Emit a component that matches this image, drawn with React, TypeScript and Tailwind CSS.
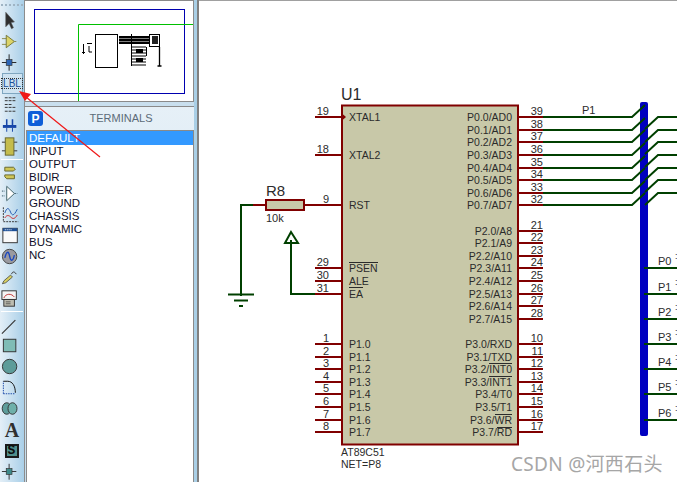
import React from 'react';

const MAROON = '#800000';
const GREEN = '#004000';
const INK = '#2b2b2b';

const Ic: React.FC<{ children: React.ReactNode }> = ({ children }) => (
  <svg width="25" height="21" viewBox="0 0 25 21" className="block">
    {children}
  </svg>
);

const TopTools = [
  // selection arrow
  <Ic key="a"><path d="M6 2 L6 17 L9.5 13.5 L12 19 L14 18 L11.5 12.5 L15 12 Z" fill="#2f2f2f" stroke="#555" strokeWidth="0.6" /></Ic>,
  // component
  <Ic key="b"><path d="M2 7.5H7M2 13.5H7M15 10.5H17" stroke="#8a8a50" strokeWidth="1" /><path d="M6.5 4 L15 10.5 L6.5 17 Z" fill="#dcd468" stroke="#77773a" strokeWidth="1" /></Ic>,
  // junction
  <Ic key="c"><path d="M9.5 2V19M2 10.5H17" stroke="#222" strokeWidth="1" /><rect x="6.5" y="7.5" width="6" height="6" fill="#2c66b8" stroke="#333" strokeWidth="0.7" /></Ic>,
  // label, selected
  <div key="d" className="w-[21px] h-[21px] bg-[#cfe3f1] border border-[#7fa6c0] flex items-center justify-center">
    <span className="font-['Liberation_Sans',sans-serif] text-[10px] leading-[9px] text-[#1c4f96] border border-dotted border-[#333] px-px">LBL</span>
  </div>,
  // script
  <Ic key="e"><path d="M5 3.5H16M5 6.5H16M5 10.5H13M5 13.5H16M5 17.5H16" stroke="#333" strokeWidth="1" strokeDasharray="3 1" /></Ic>,
  // bus
  <Ic key="f"><path d="M7 4V11M13 4V11" stroke="#1746a8" strokeWidth="1.6" /><path d="M3 11.5H17" stroke="#1746a8" strokeWidth="3" /><path d="M7 13V17M13 13V17" stroke="#1746a8" strokeWidth="1" /></Ic>,
  // sub-circuit
  <Ic key="g"><path d="M2 6H6M2 15H6M14 6H18M14 15H18" stroke="#333" strokeWidth="1" /><rect x="5.5" y="1.5" width="9" height="18" fill="#c4bc4c" stroke="#666630" strokeWidth="1" /></Ic>,
];

const MidTools = [
  // terminals
  <Ic key="h"><path d="M5 5H14L16 7L14 9H5Z" fill="#cfc658" stroke="#66662e" /><path d="M5 13H15V17H7L5 15Z" fill="#cfc658" stroke="#66662e" /></Ic>,
  // device pins
  <Ic key="i"><path d="M2 8H5M2 13H5M15 10.5H18" stroke="#356" strokeWidth="1" strokeDasharray="1.5 1" /><path d="M7 3V18L15 10.5Z" fill="#fff" stroke="#3f5f66" strokeWidth="1" /></Ic>,
  // graph
  <Ic key="j"><path d="M3.5 3V18H19" fill="none" stroke="#333" strokeWidth="1" strokeDasharray="2 1" /><path d="M5 9C7 3 9 3 11 8S15 11 18 5" stroke="#1e56b0" fill="none" /><path d="M5 14C7 11 9 11 11 13S15 16 18 11" stroke="#c82020" fill="none" /></Ic>,
  // tape
  <Ic key="k"><rect x="3" y="3" width="15" height="15" fill="#fafafa" stroke="#333" /><rect x="3" y="3" width="15" height="3" fill="#1c4f96" /><path d="M5 4.500H12" stroke="#fff" strokeDasharray="1 1" /></Ic>,
  // generator
  <Ic key="l"><circle cx="10" cy="10.500" r="7.500" fill="#9a9aa0" stroke="#444" /><path d="M5 12C7 4 9 5 10 10S13 17 15 9" fill="none" stroke="#1746c0" strokeWidth="1.400" /></Ic>,
  // probe
  <Ic key="m"><path d="M2.500 17L4 14L11 8L13 10L6 16Z" fill="#d8cf60" stroke="#444" strokeWidth="0.800" /><path d="M12 7C13 4 15 4 17 7" fill="none" stroke="#333" /></Ic>,
  // instruments
  <Ic key="n"><rect x="2" y="2.500" width="15" height="9" fill="#f4f4f4" stroke="#333" /><path d="M4 10C6 5 12 5 15 9" fill="none" stroke="#c03030" /><rect x="4" y="11.500" width="11" height="7" fill="#bcbcb0" stroke="#333" /><path d="M6 14H11M6 16H11" stroke="#333" strokeWidth="0.700" /></Ic>,
];

const DrawTools = [
  <Ic key="o"><path d="M2 20L16 6" stroke="#333" strokeWidth="1.200" /></Ic>,
  <Ic key="p"><rect x="3.500" y="4" width="13" height="13" fill="#7fbcb6" stroke="#333" strokeWidth="1" /></Ic>,
  <Ic key="q"><circle cx="10" cy="10.500" r="7.500" fill="#5d9c9a" stroke="#333" /></Ic>,
  <Ic key="r"><path d="M3.500 17V4" stroke="#1746a8" strokeDasharray="1.500 1" /><path d="M3.500 17H16" stroke="#1746a8" strokeDasharray="1.500 1" /><path d="M3.500 4H8C13 4 16 9 16 16" fill="none" stroke="#111" /></Ic>,
  <Ic key="s"><ellipse cx="7" cy="10.500" rx="4.700" ry="6" fill="#5d9c9a" stroke="#333" /><ellipse cx="13" cy="10.500" rx="4.700" ry="6" fill="#6fb0aa" stroke="#333" /></Ic>,
  <div key="t" className="w-[21px] h-[21px] flex items-center justify-center font-['Liberation_Serif',serif] font-bold text-[20px] leading-none text-[#2f2f2f]">A</div>,
  <div key="u" className="w-[14px] h-[14px] mr-[1px] bg-[#4f8f8c] border-2 border-[#1a1a1a] flex items-center justify-center font-['Liberation_Mono',monospace] font-bold text-[13px] leading-none text-[#0c0c0c]">S</div>,
  <Ic key="v"><path d="M9.500 2.500V19M2 10.500H17" stroke="#333" /><rect x="6.500" y="7.500" width="6" height="6" fill="#3e8a8a" stroke="#333" strokeWidth="0.700" /></Ic>,
];

const Cell: React.FC<{ children: React.ReactNode }> = ({ children }) => (
  <div className="h-[21px] w-full flex items-center justify-center">{children}</div>
);

const Separator = () => <div className="h-[5px] flex items-center px-[1px]"><div className="h-px w-full bg-[#7f9bb0] border-b border-white" /></div>;

const Toolbar = () => (
  <div className="w-[25px] shrink-0 flex flex-col bg-gradient-to-r from-[#e4eff7] to-[#a9cfe8] border-r border-[#8c8c8c]">
    <div className="h-[10px] pt-[4px] pl-[1px] flex gap-[2px]">
      {Array.from({ length: 6 }).map((_, i) => (
        <span key={i} className="w-[2px] h-[2px] bg-[#9fb4c4]" />
      ))}
    </div>
    {TopTools.map((t, i) => <Cell key={i}>{t}</Cell>)}
    <Separator />
    {MidTools.map((t, i) => <Cell key={i}>{t}</Cell>)}
    <Separator />
    {DrawTools.map((t, i) => <Cell key={i}>{t}</Cell>)}
  </div>
);

const Preview = () => (
  <div className="h-[102px] shrink-0 bg-white border border-[#8a8a8a] border-l-0 overflow-hidden">
    <svg width="168" height="100" viewBox="25 1 168 100" className="block">
      <rect x="34.500" y="9.500" width="150" height="84" fill="none" stroke="#0000b0" />
      <path d="M193 24.500H78.500V102" fill="none" stroke="#00c000" />
      <rect x="95.500" y="34.500" width="22" height="33" fill="#fff" stroke="#000" />
      <path d="M83.500 44V54M82 52.500H85M87 43.500H92M89 46V52H92" stroke="#000" fill="none" />
      <rect x="119" y="36" width="30" height="8" fill="#000" />
      <path d="M119 38.500H149M119 41.500H149" stroke="#fff" strokeWidth="0.500" />
      <path d="M131.500 34V66M146.500 56V47" stroke="#000" />
      <rect x="149.500" y="34.500" width="10" height="12" fill="#fff" stroke="#000" />
      <rect x="152" y="36" width="6" height="8" fill="#222" />
      <path d="M159.500 47V66M157.500 66H161.500" stroke="#000" strokeWidth="1.300" />
      <path d="M131 47H146M131 50H146M131 53H146M131 56H146M131 59H146M131 62H146M131 65H146" stroke="#000" />
      <rect x="136" y="49" width="7" height="4" fill="#000" />
      <rect x="136" y="58" width="7" height="4" fill="#000" />
    </svg>
  </div>
);

const terminals = ['DEFAULT', 'INPUT', 'OUTPUT', 'BIDIR', 'POWER', 'GROUND', 'CHASSIS', 'DYNAMIC', 'BUS', 'NC'];

const TerminalsPanel = () => (
  <div className="flex-1 flex flex-col border-t border-[#8a8a8a] bg-gradient-to-b from-[#e6f0f7] to-[#c4dded] min-h-0">
    <div className="h-[23px] shrink-0 flex items-center pl-[3px] relative">
      <div className="w-[15px] h-[15px] rounded-[3px] bg-[#0f5fd8] flex items-center justify-center text-white font-bold text-[12px] leading-none font-['Liberation_Sans',sans-serif]">P</div>
      <span className="flex-1 text-center pl-[5px] text-[11px] text-[#5c6b78] font-['Liberation_Sans',sans-serif]">TERMINALS</span>
    </div>
    <div className="flex-1 ml-[1px] mr-0 bg-white border-l border-t border-r border-[#8a8a8a] font-['Liberation_Sans',sans-serif] text-[11.500px] text-[#10102a]">
      {terminals.map((t, i) => (
        <div
          key={t}
          className={i === 0 ? 'h-[14px] leading-[14px] pl-[2px] bg-[#3399ff] text-white' : 'h-[13px] leading-[13px] pl-[2px]'}
        >
          {t}
        </div>
      ))}
    </div>
  </div>
);

type Pin = { y: number; n: string; label: string };

const leftPins: Pin[] = [
  { y: 117, n: '19', label: 'XTAL1' },
  { y: 155, n: '18', label: 'XTAL2' },
  { y: 205, n: '9', label: 'RST' },
  { y: 268, n: '29', label: 'PSEN' },
  { y: 281, n: '30', label: 'ALE' },
  { y: 294, n: '31', label: 'EA' },
  { y: 344, n: '1', label: 'P1.0' },
  { y: 357, n: '2', label: 'P1.1' },
  { y: 369, n: '3', label: 'P1.2' },
  { y: 382, n: '4', label: 'P1.3' },
  { y: 394, n: '5', label: 'P1.4' },
  { y: 407, n: '6', label: 'P1.5' },
  { y: 420, n: '7', label: 'P1.6' },
  { y: 432, n: '8', label: 'P1.7' },
];

const rightPins: Pin[] = [
  { y: 117, n: '39', label: 'P0.0/AD0' },
  { y: 130, n: '38', label: 'P0.1/AD1' },
  { y: 142, n: '37', label: 'P0.2/AD2' },
  { y: 155, n: '36', label: 'P0.3/AD3' },
  { y: 168, n: '35', label: 'P0.4/AD4' },
  { y: 180, n: '34', label: 'P0.5/AD5' },
  { y: 193, n: '33', label: 'P0.6/AD6' },
  { y: 205, n: '32', label: 'P0.7/AD7' },
  { y: 231, n: '21', label: 'P2.0/A8' },
  { y: 243, n: '22', label: 'P2.1/A9' },
  { y: 256, n: '23', label: 'P2.2/A10' },
  { y: 268, n: '24', label: 'P2.3/A11' },
  { y: 281, n: '25', label: 'P2.4/A12' },
  { y: 294, n: '26', label: 'P2.5/A13' },
  { y: 306, n: '27', label: 'P2.6/A14' },
  { y: 319, n: '28', label: 'P2.7/A15' },
  { y: 344, n: '10', label: 'P3.0/RXD' },
  { y: 357, n: '11', label: 'P3.1/TXD' },
  { y: 369, n: '12', label: 'P3.2/INT0' },
  { y: 382, n: '13', label: 'P3.3/INT1' },
  { y: 394, n: '14', label: 'P3.4/T0' },
  { y: 407, n: '15', label: 'P3.5/T1' },
  { y: 420, n: '16', label: 'P3.6/WR' },
  { y: 432, n: '17', label: 'P3.7/RD' },
];

const busPorts = [
  { y: 268, t: 'P0' },
  { y: 294, t: 'P1' },
  { y: 319, t: 'P2' },
  { y: 344, t: 'P3' },
  { y: 369, t: 'P4' },
  { y: 394, t: 'P5' },
  { y: 420, t: 'P6' },
];

const overbars = [
  'M349 262.500H378',
  'M349 287.500H363',
  'M489 363.500H512',
  'M489 376.500H512',
  'M495 414.500H512',
  'M497 427.500H512',
];

const Schematic = () => (
  <svg
    width="478"
    height="481"
    viewBox="199 1 478 481"
    className="block font-['Liberation_Sans',sans-serif]"
    fontSize="10.500"
    fill={INK}
  >
    {/* chip */}
    <rect x="342" y="105.500" width="176" height="339" fill="#c8c8a8" stroke={MAROON} strokeWidth="2" />
    <text x="341" y="100" fontSize="16">U1</text>
    <path d="M342 113.500L346 117L342 120.500Z" fill={MAROON} />
    <text x="341" y="456">AT89C51</text>
    <text x="341" y="468">NET=P8</text>

    {leftPins.map((p) => (
      <g key={p.n}>
        <path d={`M315 ${p.y}H342`} stroke={MAROON} strokeWidth="2" />
        <text x="329" y={p.y - 2} textAnchor="end" fontSize="11">{p.n}</text>
        <text x="349" y={p.y + 4}>{p.label}</text>
      </g>
    ))}
    {rightPins.map((p) => (
      <g key={p.n}>
        <path d={`M518 ${p.y}H543`} stroke={MAROON} strokeWidth="2" />
        <text x="543" y={p.y - 2} textAnchor="end" fontSize="11">{p.n}</text>
        <text x="512" y={p.y + 4} textAnchor="end">{p.label}</text>
      </g>
    ))}
    {overbars.map((d) => <path key={d} d={d} stroke={INK} strokeWidth="1" />)}

    {/* R8 and the wires on the left */}
    <path d="M241 296V205H253" fill="none" stroke={GREEN} strokeWidth="2" />
    <path d="M253 205H266M304 205H342" stroke={MAROON} strokeWidth="2" />
    <rect x="266" y="200" width="38" height="10" fill="#c8c8a8" stroke={MAROON} strokeWidth="2" />
    <text x="266" y="196" fontSize="15">R8</text>
    <text x="266" y="222" fontSize="11">10k</text>
    <path d="M228 294.500H254M234 300.500H248M239 306H243" stroke={GREEN} strokeWidth="2" />
    <path d="M315 294H291V240" fill="none" stroke={GREEN} strokeWidth="2" />
    <path d="M291 232L298 243H285Z" fill="none" stroke={GREEN} strokeWidth="2" />

    {/* bus */}
    <rect x="640" y="102" width="8" height="334" rx="2" fill="#0000c0" />
    {rightPins.slice(0, 8).map((p) => (
      <path key={p.n} d={`M543 ${p.y}H632L645 ${p.y - 12}`} fill="none" stroke={GREEN} strokeWidth="2" />
    ))}
    {[117, 130, 142, 155, 168, 180, 193].map((y) => (
      <path key={y} d={`M677 ${y}H658L645 ${y + 12}`} fill="none" stroke={GREEN} strokeWidth="2" />
    ))}
    <text x="582" y="114" fontSize="11">P1</text>
    {busPorts.map((p) => (
      <g key={p.t}>
        <path d={`M644 ${p.y}H677`} stroke={GREEN} strokeWidth="2" />
        <text x="658" y={p.y - 3} fontSize="11">{p.t}</text>
        <text x="675" y={p.y - 9} fontSize="9">:</text>
      </g>
    ))}
  </svg>
);

const App: React.FC = () => {
  return (
    <div className="relative w-[677px] h-[482px] overflow-hidden flex bg-white">
      <Toolbar />
      <div className="w-[169px] shrink-0 flex flex-col bg-[#dfeaf3]">
        <Preview />
        <div className="h-[4px] shrink-0 bg-[#c9dfee]" />
        <TerminalsPanel />
      </div>
      <div className="w-[5px] shrink-0 bg-[#a9cfe6] border-r-2 border-[#808080]" />
      <div className="flex-1 border-t border-[#a0a0a0] bg-white overflow-hidden">
        <Schematic />
      </div>

      {/* red annotation arrow */}
      <svg width="120" height="90" viewBox="0 80 120 90" className="absolute left-0 top-[80px] pointer-events-none">
        <path d="M100 157L26 97" stroke="#f01818" strokeWidth="1.200" />
        <path d="M19 91L31 94L25 101Z" fill="#f01818" />
      </svg>

      <div className="absolute left-[511px] top-[452px] text-[19px] leading-[24px] tracking-[0.300px] text-[#a6a6a6] font-['Noto_Sans','Noto_Sans_CJK_SC',sans-serif] whitespace-nowrap">
        CSDN @河西石头
      </div>
    </div>
  );
};

export default App;
